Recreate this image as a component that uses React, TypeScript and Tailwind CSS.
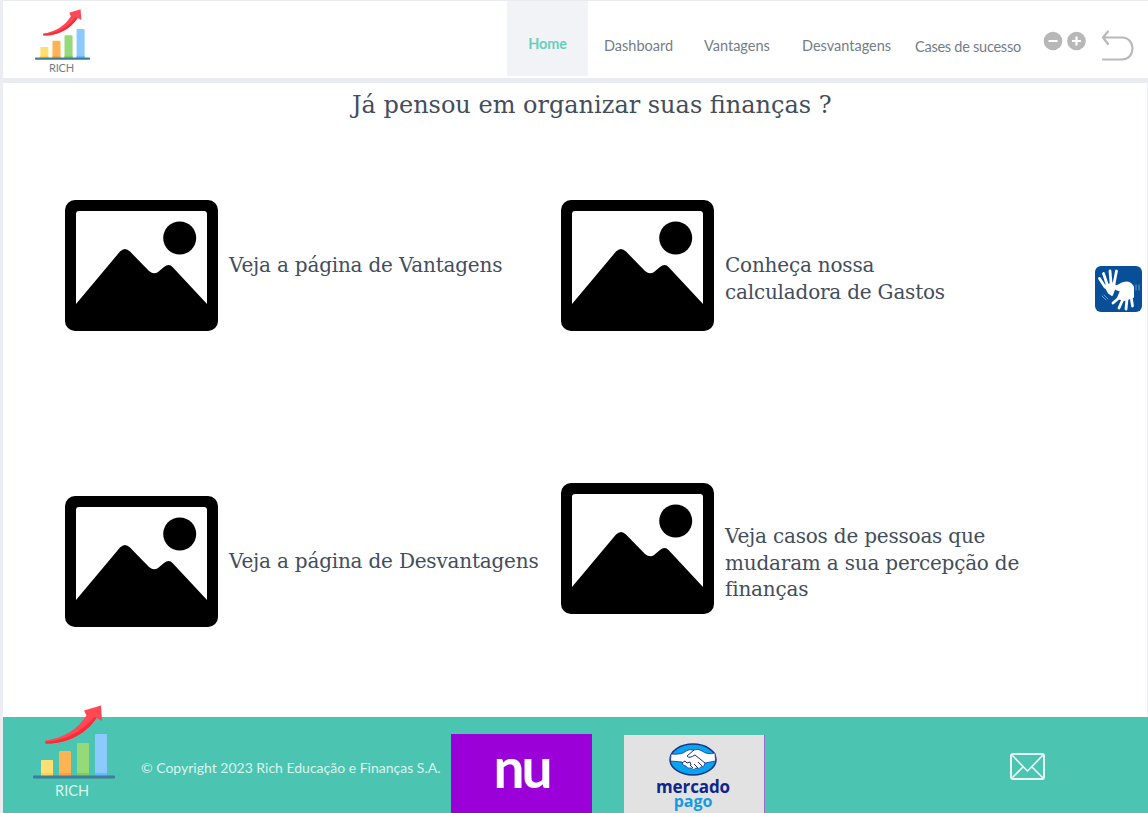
import React from "react";

function Growth({ className }: { className: string }) {
  return (
    <svg className={className} viewBox="0 0 82 74" preserveAspectRatio="none" aria-hidden="true">
      <rect x="8" y="55" width="12" height="16" rx="1" fill="#ffdf73" />
      <rect x="26" y="46" width="12" height="25" rx="1" fill="#ffb453" />
      <rect x="44" y="38" width="12" height="33" rx="1" fill="#95d979" />
      <rect x="62" y="29" width="12" height="42" rx="1" fill="#8bc9ff" />
      <path d="M8 68h12v3H8z" fill="#ffd34c" />
      <path d="M26 68h12v3H26z" fill="#ffa23a" />
      <path d="M44 68h12v3H44z" fill="#7fcd5f" />
      <path d="M62 68h12v3H62z" fill="#68b8fd" />
      <rect x="0" y="70.5" width="82" height="3" rx="1" fill="#407d9c" />
      <path d="M12.500 35.500C31 33 45 24 53.500 10.500L51 5.500 68 .500 69 16 63.500 13C53 29 34 39 13 38.500Q11 37 12.500 35.500Z" fill="#ff4756" />
      <path d="M12 37C34 35 50 26 61 12L63.500 13C53 29 34 39 13 38.500Z" fill="#fb2b3a" />
    </svg>
  );
}

function Picture() {
  return (
    <svg className="h-[131px] w-[153px] shrink-0" viewBox="0 0 153 131" aria-hidden="true">
      <rect width="153" height="131" rx="10" />
      <path d="M14 11H139Q142 11 142 14V104L108 67.500Q104 63 99 67L93 72Q89 75 84 71L65 51.500Q60 46.500 55 51.500L11 104V14Q11 11 14 11Z" fill="#fff" />
      <circle cx="114.700" cy="38" r="16.500" />
    </svg>
  );
}

function Card({ lines, className }: { lines: string[]; className: string }) {
  return (
    <div className={`flex items-start ${className}`}>
      <Picture />
      <p className="ml-[11px] pt-[52px] font-['DejaVu_Serif',serif] text-[20px] leading-[26.5px] font-normal tracking-[-0.2px] whitespace-nowrap text-[#434d5b]">
        {lines.map((line) => (
          <span key={line} className="block">{line}</span>
        ))}
      </p>
    </div>
  );
}

function Header() {
  return (
    <header className="flex h-[83px] items-start border-t border-b-[5px] border-[#e9ebf1] bg-white pl-[31px] text-[14.5px] text-[#757c87]">
      <div className="flex w-[56px] flex-col items-center pt-[8px]">
        <Growth className="h-[51px] w-[55px]" />
        <span className="mr-[1px] text-[11px] leading-[15px] tracking-[-0.2px]">RICH</span>
      </div>
      <nav className="ml-[417px] flex w-[522px] items-start leading-[20px] whitespace-nowrap">
        <a className="flex h-[75px] w-[81px] justify-center bg-[#f1f3f7] pt-[33px] font-bold tracking-[-0.2px] text-[#6bcdbb]">Home</a>
        <a className="ml-[16px] w-[100px] pt-[35px]">Dashboard</a>
        <a className="w-[98px] pt-[35px]">Vantagens</a>
        <a className="w-[113px] pt-[35px]">Desvantagens</a>
        <a className="pt-[36px] tracking-[-0.25px]">Cases de sucesso</a>
      </nav>
      <div className="ml-[14px] flex pt-[30px]">
        <svg className="h-[20px] w-[43px]" viewBox="0 0 43 20" fill="none" aria-hidden="true">
          <circle cx="10" cy="10" r="9.300" fill="#b7b7b7" />
          <circle cx="33.500" cy="10" r="9.300" fill="#b7b7b7" />
          <path d="M5.500 10h9M29 10h9M33.500 5.500v9" stroke="white" strokeWidth="2.200" />
        </svg>
        <svg className="mt-[-2px] ml-[15px] h-[34px] w-[34px]" viewBox="0 0 34 34" fill="none" stroke="#b9b9b9" strokeWidth="2.200" strokeLinecap="round" strokeLinejoin="round" aria-hidden="true">
          <path d="M7 2.500L2 8.500 7 15M2 8.500H21C35 8.500 35 30.500 21 30.500H2" />
        </svg>
      </div>
    </header>
  );
}

function SignLanguage() {
  return (
    <svg className="h-[46px] w-[47px]" viewBox="0 0 47 46" fill="none" aria-label="Libras">
      <rect width="47" height="46" rx="6" fill="#075099" />
      <g stroke="white" strokeLinecap="round" strokeLinejoin="round">
        <path d="M10 21L4.500 12.500M12 18L8.500 7.500M16 17L15 5M19 18L21.500 5" strokeWidth="2.800" />
        <path d="M10 20L19 17 20 21 17 29 14 27Z" fill="white" strokeWidth="2" />
        <path d="M17 21L27 20M25 31L18 37M28 33L24 42M32 33L31 43M36 30L37.500 40" strokeWidth="2.800" />
        <path d="M26 18Q34 14 38 21V31L29 34 23 32 26 25 19 22Z" fill="white" strokeWidth="2" />
        <path d="M7 30l4 4M9 29l4 4M41 19v5M44 19v5" stroke="#6e9bc6" strokeWidth="1" />
      </g>
    </svg>
  );
}

function Handshake() {
  return (
    <svg className="h-[33px] w-[48px] shrink-0" viewBox="0 0 48 33" aria-hidden="true">
      <ellipse cx="24" cy="16.500" rx="23" ry="15.500" fill="#08a5ec" stroke="#17338e" strokeWidth="1.500" />
      <path d="M2 11Q13 12 17 8Q20 6 25 7Q29 5 33 8Q38 12 46 10L46.500 18 36 20Q36 24 32 24Q30 27 27 25Q25 28 22 25Q18 26 17 23Q13 23 13 19L1.500 18Z" fill="white" stroke="#17338e" strokeWidth=".8" />
      <path d="M25 7L18 13Q20 16 26 12L36 20M29 19l4 4M25 21l4 4M21 22l3 3M13 20l3-2 2 2 3-1 1 3" fill="none" stroke="#17338e" strokeWidth="1" />
    </svg>
  );
}

function Footer() {
  return (
    <footer className="flex h-[96px] items-start bg-[#4bc5b1] pl-[30px] text-[#d9f4ef]">
      <div className="mt-[-12px] flex w-[82px] flex-col items-center">
        <Growth className="h-[74px] w-[82px]" />
        <span className="mr-[4px] mt-[2px] text-[14.5px] leading-[20px]">RICH</span>
      </div>
      <p className="ml-[26px] w-[310px] pt-[41px] text-[14px] leading-[20px] whitespace-nowrap">© Copyright 2023 Rich Educação e Finanças S.A.</p>
      <div className="mt-[17px] flex h-[79px] w-[141px] justify-center overflow-hidden bg-[#9b00d9] text-[55px] leading-[67px] font-bold tracking-[-3px] text-white">
        <span>nu</span>
      </div>
      <div className="mt-[18px] ml-[32px] flex h-[78px] w-[141px] flex-col items-center overflow-hidden border-r border-[#a06acb] bg-[#e2e2e2] pt-[8px] pr-[2px] font-['Open_Sans',sans-serif]">
        <Handshake />
        <span className="mt-[3px] text-[17px] leading-[15px] font-bold tracking-[-0.1px] text-[#10258b]">mercado</span>
        <span className="text-[16px] leading-[14px] font-bold text-[#129be3]">pago</span>
      </div>
      <svg className="mt-[36px] ml-[245px] h-[27px] w-[35px]" viewBox="0 0 35 27" fill="none" stroke="#e5f8f5" strokeWidth="2" strokeLinejoin="round" aria-label="Email">
        <rect x="1" y="1" width="33" height="25" rx="2" />
        <path d="M2 2L14 14.500 17.500 18 21 14.500L33 2M2 25L13 14M33 25L22 14" strokeWidth="1.700" />
      </svg>
    </footer>
  );
}

export default function App() {
  return (
    <div className="flex h-[813px] w-[1148px] flex-col overflow-hidden border-l-[3px] border-[#ebedf3] bg-white font-['Lato',sans-serif]">
      <Header />
      <main className="flex h-[634px] border-r border-[#f0f1f4]">
        <div className="flex w-[1090px] flex-col">
          <h1 className="ml-[349px] h-[117px] pt-[5px] font-['DejaVu_Serif',serif] text-[24px] leading-[34px] font-normal whitespace-nowrap text-[#434d5b]">Já pensou em organizar suas finanças ?</h1>
          <div className="grid grid-cols-[496px_1fr] pl-[62px]">
            <Card className="h-[283px]" lines={["Veja a página de Vantagens"]} />
            <Card className="h-[283px]" lines={["Conheça nossa", "calculadora de Gastos"]} />
            <Card className="pt-[13px]" lines={["Veja a página de Desvantagens"]} />
            <Card className="[&>p]:pt-[40px]" lines={["Veja casos de pessoas que", "mudaram a sua percepção de", "finanças"]} />
          </div>
        </div>
        <aside className="ml-[2px] pt-[183px]"><SignLanguage /></aside>
      </main>
      <Footer />
    </div>
  );
}
